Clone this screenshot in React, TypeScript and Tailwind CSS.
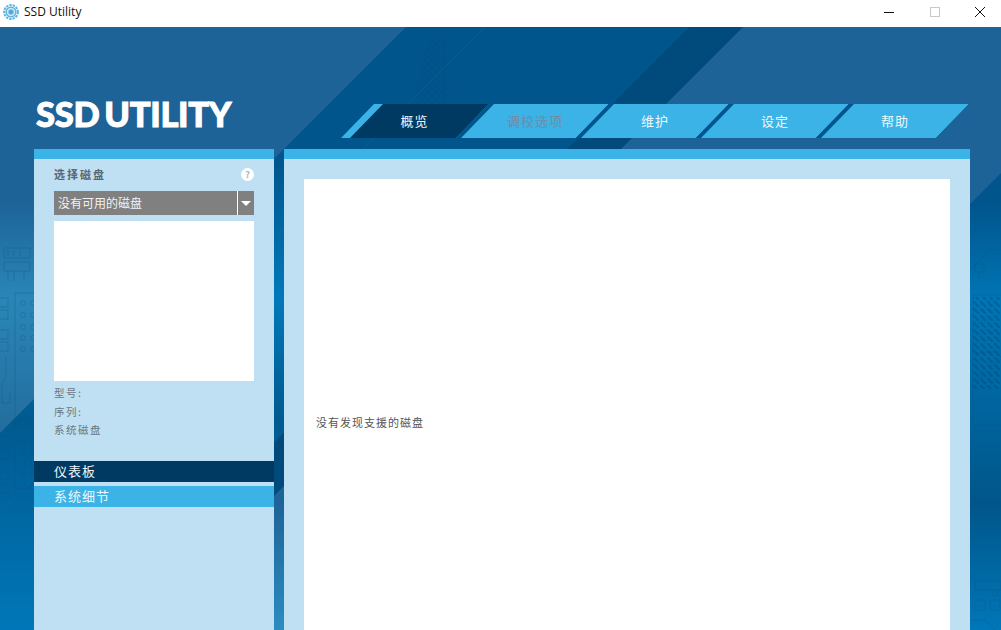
const tabs = [
  { label: "调校选项", disabled: true },
  { label: "维护" },
  { label: "设定" },
  { label: "帮助" },
];

const rowDots = [303, 315, 327, 338, 349, 442, 453, 464, 475, 487];
const chipRows = [298, 310, 330, 342, 436, 450, 470, 484];

const Backdrop = () => (
  <svg className="absolute inset-0 h-full w-full" viewBox="0 27 1001 603">
    <defs>
      <linearGradient id="base" gradientUnits="userSpaceOnUse" x1="0" y1="27" x2="0" y2="630">
        <stop offset="0.287" stopColor="#1d6397" />
        <stop offset="0.45" stopColor="#2a86b8" />
        <stop offset="0.65" stopColor="#23709f" />
        <stop offset="0.784" stopColor="#1d6397" />
        <stop offset="1" stopColor="#2b8cc0" />
      </linearGradient>
      <linearGradient id="band" gradientUnits="userSpaceOnUse" x1="0" y1="27" x2="0" y2="630">
        <stop offset="0.212" stopColor="#00558c" />
        <stop offset="0.45" stopColor="#0079ba" />
        <stop offset="0.65" stopColor="#005a90" />
        <stop offset="1" stopColor="#0077b8" />
      </linearGradient>
      <linearGradient id="band2" gradientUnits="userSpaceOnUse" x1="0" y1="27" x2="0" y2="630">
        <stop offset="0.29" stopColor="#00558c" />
        <stop offset="0.45" stopColor="#0075b4" />
        <stop offset="0.79" stopColor="#00568a" />
        <stop offset="1" stopColor="#0077b8" />
      </linearGradient>
      <pattern id="dashes" width="7" height="7" patternUnits="userSpaceOnUse">
        <path d="M1 1 L5 5" stroke="#003f6e" strokeWidth="2" strokeLinecap="round" />
      </pattern>
    </defs>
    <rect x="0" y="27" width="1001" height="603" fill="url(#base)" />
    <polygon points="406,27 689,27 86,630 -197,630" fill="url(#band)" />
    <polygon points="689,27 743,27 140,630 86,630" fill="#004a7c" />
    <polygon points="1001,173 1001,630 970,630 970,204" fill="url(#band2)" />
    <line x1="485" y1="27" x2="-118" y2="630" stroke="#1d6397" strokeOpacity="0.4" />
    <g fill="none" stroke="#0e4f80" strokeOpacity="0.3">
      <rect x="15" y="293" width="30" height="195" />
      {rowDots.map((y) => (
        <g key={y}>
          <circle cx="23" cy={y} r="2.5" />
          <circle cx="33" cy={y} r="2.5" />
        </g>
      ))}
      {chipRows.map((y) => (
        <rect key={y} x="-2" y={y} width="10" height="9" />
      ))}
      <path d="M4 248 h26 v10 h-26 z M4 262 h26 v9 h-26 z M8 250 v6 M14 250 v6 M20 250 v6 M8 271 v10 M14 271 v10 M24 271 v10" />
      <path d="M6 357 v20 l-4 6 v20 h8 v-10" />
      <path d="M410 130 v-30 l18 -18 v-30 l12 -12 v-12 M420 130 l28 -28 v-30 l-8 -8 M440 90 v-25 l10 -10" />
      <path d="M385 138 l-20 -12 h-20 M375 104 l-25 20" />
      <path d="M970 270 l20 -20 h11 M975 264 h9 v8 h-9 z M979 272 v5" />
      <rect x="973" y="295" width="40" height="130" />
      <path d="M975 355 l6 -3 h14 l6 5 M973 400 h28 M975 590 h26 v-9 h-26 z M975 600 h10 v10 h-10 z M990 600 h10 v10 h-10 z M970 620 h15 l10 10 M995 590 a3 3 0 1 0 .1 0" />
    </g>
    <rect x="973" y="297" width="28" height="92" fill="url(#dashes)" opacity="0.35" />
    <polygon points="428,40 450,40 450,130 404,130" fill="url(#dashes)" opacity="0.12" />
  </svg>
);

const WindowBar = () => (
  <div className="flex h-[27px] items-center justify-between bg-white pb-[4px]">
    <div className="flex items-center">
      <svg className="ml-[3px] h-4 w-4" viewBox="0 0 16 16">
        <circle cx="8" cy="8" r="6.9" fill="none" stroke="#5fb3e0" strokeWidth="2" strokeDasharray="2.4 1" />
        <circle cx="8" cy="8" r="5.6" fill="#5fb3e0" />
        <circle cx="8" cy="8" r="3.4" fill="none" stroke="#d6edf9" strokeWidth="1.3" />
        <circle cx="8" cy="8" r="1.4" fill="#4aa6da" />
      </svg>
      <span className="ml-[5px] text-[12px] text-[#111] [font-family:'Open_Sans',sans-serif]">SSD Utility</span>
    </div>
    <div className="flex h-full items-center">
      <div className="flex w-[46px] justify-center">
        <svg className="h-[12px] w-[12px]" viewBox="0 0 12 12">
          <path d="M1 6.5 H11" stroke="#111" strokeWidth="1" />
        </svg>
      </div>
      <div className="flex w-[46px] justify-center">
        <svg className="h-[12px] w-[12px]" viewBox="0 0 12 12">
          <rect x="1.5" y="1.5" width="9" height="9" fill="none" stroke="#c8c8c8" />
        </svg>
      </div>
      <div className="flex w-[43px] justify-center">
        <svg className="h-[12px] w-[12px]" viewBox="0 0 12 12">
          <path d="M1 1 L11 11 M11 1 L1 11" stroke="#111" strokeWidth="1" />
        </svg>
      </div>
    </div>
  </div>
);

const TabBar = () => (
  <div className="mt-[77px] flex h-[34px] text-[13px] tracking-[1px]">
    <div className="w-[148px] bg-[#3bb3e6] pl-[9px] [clip-path:polygon(33px_0,100%_0,calc(100%-33px)_100%,0_100%)]">
      <div className="flex h-full items-center justify-center bg-[#003a63] pr-[10px] text-[#f0f8fc] [clip-path:polygon(33px_0,100%_0,calc(100%-33px)_100%,0_100%)]">
        概览
      </div>
    </div>
    {tabs.map((tab) => (
      <div
        key={tab.label}
        className="-ml-[33px] w-[153px] bg-[#00558c] pl-[5px] [clip-path:polygon(33px_0,100%_0,calc(100%-33px)_100%,0_100%)]"
      >
        <div
          className={
            tab.disabled
              ? "flex h-full items-center justify-center bg-[#3bb3e6] text-[#6b8ea6] [clip-path:polygon(33px_0,100%_0,calc(100%-33px)_100%,0_100%)]"
              : "flex h-full items-center justify-center bg-[#3bb3e6] text-[#f0f8fc] [clip-path:polygon(33px_0,100%_0,calc(100%-33px)_100%,0_100%)]"
          }
        >
          {tab.label}
        </div>
      </div>
    ))}
  </div>
);

const DiskPanel = () => (
  <div className="flex w-[240px] flex-col bg-[#bfe0f3]">
    <div className="h-[10px] bg-[#3bb3e6]" />
    <div className="px-[20px]">
      <div className="mt-[8px] flex h-[15px] items-center justify-between">
        <span className="text-[11px] font-bold tracking-[2px] text-[#5a6670]">选择磁盘</span>
        <span className="flex h-[13px] w-[13px] items-center justify-center rounded-full bg-white text-[9px] font-bold text-[#a9b4bb]">
          ?
        </span>
      </div>
      <div className="mt-[9px] flex h-[24px] items-center justify-between bg-[#808080] pl-[4px] text-[12px] text-[#f2f2f2]">
        <span className="pb-[1px]">没有可用的磁盘</span>
        <div className="flex h-full w-[17px] items-center justify-center border-l border-white">
          <div className="h-0 w-0 border-x-[5px] border-t-[5px] border-x-transparent border-t-white" />
        </div>
      </div>
      <div className="mt-[6px] h-[160px] bg-white" />
      <div className="mt-[3px] flex flex-col text-[10.5px] leading-[18.5px] tracking-[1.5px] text-[#6b7780]">
        <span>型号:</span>
        <span>序列:</span>
        <span>系统磁盘</span>
      </div>
    </div>
    <div className="mt-[21px] flex h-[21px] items-center bg-[#003a63] pb-[1px] pl-[20px] text-[13px] tracking-[1px] text-[#eef7fb]">
      仪表板
    </div>
    <div className="mt-[4px] flex h-[21px] items-center bg-[#3bb3e6] pb-[1px] pl-[20px] text-[13px] tracking-[1px] text-[#eef7fb]">
      系统细节
    </div>
  </div>
);

const DetailPanel = () => (
  <div className="flex flex-1 flex-col bg-[#bfe0f3]">
    <div className="h-[10px] bg-[#3bb3e6]" />
    <div className="flex-1 px-[20px] pt-[20px]">
      <div className="flex h-full items-start bg-white pl-[12px] pt-[235px] text-[11px] tracking-[1px] text-[#555]">
        没有发现支援的磁盘
      </div>
    </div>
  </div>
);

export default function App() {
  return (
    <div className="flex h-[630px] w-[1001px] flex-col overflow-hidden [font-family:'Noto_Sans_CJK_SC','Noto_Sans',sans-serif]">
      <WindowBar />
      <div className="relative flex-1 overflow-hidden">
        <Backdrop />
        <div className="relative flex h-full flex-col pl-[34px] pr-[31px]">
          <div className="flex h-[122px] shrink-0">
            <div className="w-[307px] whitespace-nowrap pl-[2px] pt-[62px] text-[34.5px] font-black leading-[50px] tracking-[-0.3px] text-white [-webkit-text-stroke:1px_white] [font-family:'Lato',sans-serif] [word-spacing:-3px]">
              SSD UTILITY
            </div>
            <TabBar />
          </div>
          <div className="flex flex-1 gap-[10px] overflow-hidden">
            <DiskPanel />
            <DetailPanel />
          </div>
        </div>
      </div>
    </div>
  );
}
